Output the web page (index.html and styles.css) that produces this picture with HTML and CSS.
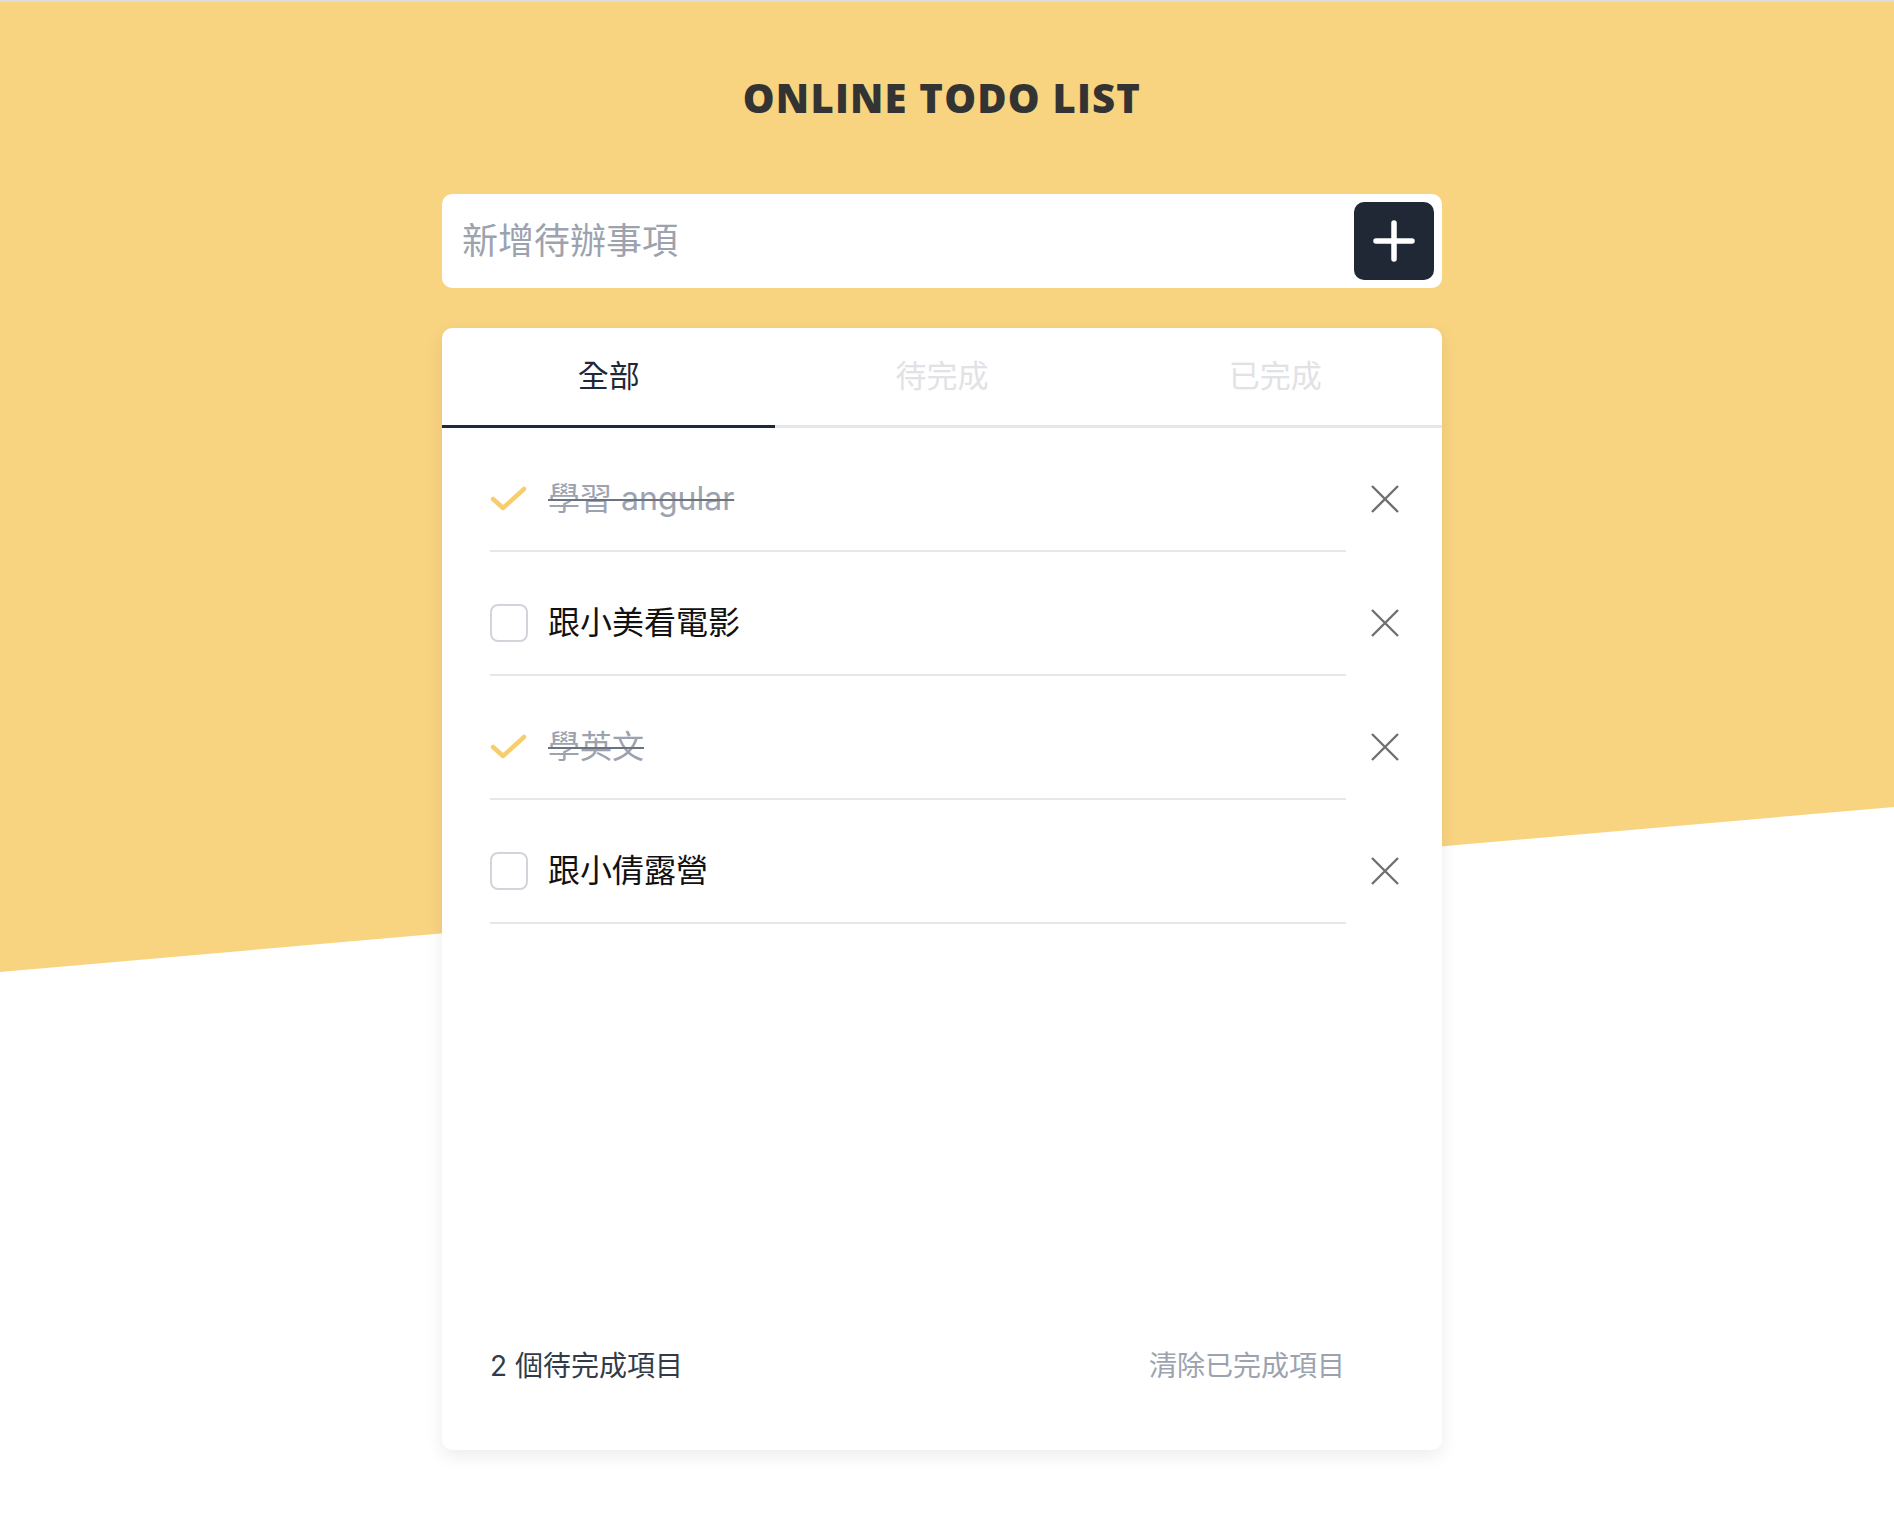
FILE: index.html
```html
<!DOCTYPE html>
<html lang="zh-Hant">
<head>
<meta charset="utf-8">
<title>Online Todo List</title>
<link rel="stylesheet" href="styles.css">
</head>
<body>
<div class="bg"></div>
<main class="app">
  <h1 class="title">ONLINE TODO LIST</h1>
  <div class="add">
    <input class="add-input" type="text" placeholder="新增待辦事項">
    <button class="add-btn" aria-label="新增">
      <svg width="42" height="42" viewBox="0 0 42 42"><path d="M21 3V39M3 21H39" stroke="#fff" stroke-width="5.5" stroke-linecap="round"/></svg>
    </button>
  </div>
  <section class="card">
    <div class="tabs">
      <div class="tab active">全部</div>
      <div class="tab">待完成</div>
      <div class="tab">已完成</div>
    </div>
    <ul class="list">
      <li class="item done">
        <div class="item-main">
          <span class="check"><svg width="38" height="38" viewBox="0 0 38 38"><path d="M3 19L13 28L34 9" fill="none" stroke="#F8CD6C" stroke-width="4.5" stroke-linecap="round" stroke-linejoin="round"/></svg></span>
          <span class="text">學習 angular</span>
        </div>
        <span class="del"><svg width="32" height="32" viewBox="0 0 32 32"><path d="M3 3L29 29M29 3L3 29" stroke="#707070" stroke-width="2.4"/></svg></span>
      </li>
      <li class="item">
        <div class="item-main">
          <span class="box"></span>
          <span class="text">跟小美看電影</span>
        </div>
        <span class="del"><svg width="32" height="32" viewBox="0 0 32 32"><path d="M3 3L29 29M29 3L3 29" stroke="#707070" stroke-width="2.4"/></svg></span>
      </li>
      <li class="item done">
        <div class="item-main">
          <span class="check"><svg width="38" height="38" viewBox="0 0 38 38"><path d="M3 19L13 28L34 9" fill="none" stroke="#F8CD6C" stroke-width="4.5" stroke-linecap="round" stroke-linejoin="round"/></svg></span>
          <span class="text">學英文</span>
        </div>
        <span class="del"><svg width="32" height="32" viewBox="0 0 32 32"><path d="M3 3L29 29M29 3L3 29" stroke="#707070" stroke-width="2.4"/></svg></span>
      </li>
      <li class="item">
        <div class="item-main">
          <span class="box"></span>
          <span class="text">跟小倩露營</span>
        </div>
        <span class="del"><svg width="32" height="32" viewBox="0 0 32 32"><path d="M3 3L29 29M29 3L3 29" stroke="#707070" stroke-width="2.4"/></svg></span>
      </li>
    </ul>
    <footer class="foot">
      <span class="count">2 個待完成項目</span>
      <span class="clear">清除已完成項目</span>
    </footer>
  </section>
</main>
</body>
</html>
```
FILE: styles.css
```css
html, body {
  margin: 0;
  background: #ffffff;
}
body {
  position: relative;
  border-top: 2px solid #dcdcdc;
  padding-right: 10px;
  min-height: 1536px;
  font-family: Inter, "Noto Sans CJK TC", sans-serif;
}
.bg {
  position: absolute;
  left: 0;
  top: 0;
  width: 100%;
  height: 970px;
  background: #F8D380;
  clip-path: polygon(0 0, 100% 0, 100% 805px, 0 970px);
}
.app {
  position: relative;
  width: 1000px;
  margin: 0 auto;
  padding-top: 67px;
}
.title {
  margin: 0;
  height: 58px;
  line-height: 58px;
  text-align: center;
  font-family: "Open Sans", sans-serif;
  font-weight: 800;
  font-size: 40px;
  color: #333333;
  letter-spacing: 1.2px;
}
.add {
  margin-top: 67px;
  height: 94px;
  box-sizing: border-box;
  background: #fff;
  border-radius: 10px;
  display: flex;
  align-items: center;
  padding: 8px 8px 8px 20px;
}
.add-input {
  flex: 1;
  border: 0;
  outline: none;
  background: transparent;
  font-family: Inter, "Noto Sans CJK TC", sans-serif;
  font-size: 36px;
  color: #333;
  padding: 0;
}
.add-input::placeholder {
  color: #9ca3af;
}
.add-btn {
  width: 80px;
  height: 78px;
  border: 0;
  border-radius: 10px;
  background: #202836;
  display: flex;
  align-items: center;
  justify-content: center;
  padding: 0;
}
.card {
  margin-top: 40px;
  height: 1122px;
  background: #fff;
  border-radius: 10px;
  box-shadow: 0 6px 18px rgba(0, 0, 0, 0.08);
  display: flex;
  flex-direction: column;
}
.tabs {
  display: grid;
  grid-template-columns: 1fr 1fr 1fr;
}
.tab {
  height: 97px;
  line-height: 95px;
  text-align: center;
  font-size: 31px;
  color: #e1e2e5;
  border-bottom: 3px solid #e5e7eb;
}
.tab.active {
  color: #1f2937;
  border-bottom-color: #1f2937;
}
.list {
  list-style: none;
  margin: 0;
  padding: 0 41px 0 48px;
  flex: 1;
}
.item {
  display: flex;
  align-items: flex-start;
  padding-top: 51px;
}
.item-main {
  flex: 1;
  display: flex;
  align-items: center;
  gap: 20px;
  height: 40px;
  padding-bottom: 31px;
  border-bottom: 2px solid #e5e7eb;
}
.check, .box {
  width: 38px;
  height: 38px;
  flex: none;
  display: flex;
  align-items: center;
  justify-content: center;
}
.box {
  box-sizing: border-box;
  border: 2px solid #d1d5db;
  border-radius: 8px;
}
.text {
  font-size: 32px;
  color: #111;
  line-height: 40px;
}
.done .text {
  color: #9ca3af;
  text-decoration: line-through;
  text-decoration-color: #6b7280;
  text-decoration-thickness: 2px;
}
.del {
  width: 32px;
  height: 40px;
  margin-left: 23px;
  display: flex;
  align-items: center;
  justify-content: center;
}
.foot {
  display: flex;
  justify-content: space-between;
  padding: 0 97px 64px 48px;
  font-size: 28px;
  line-height: 40px;
}
.count {
  color: #333b48;
}
.clear {
  color: #9ca3af;
}
```
